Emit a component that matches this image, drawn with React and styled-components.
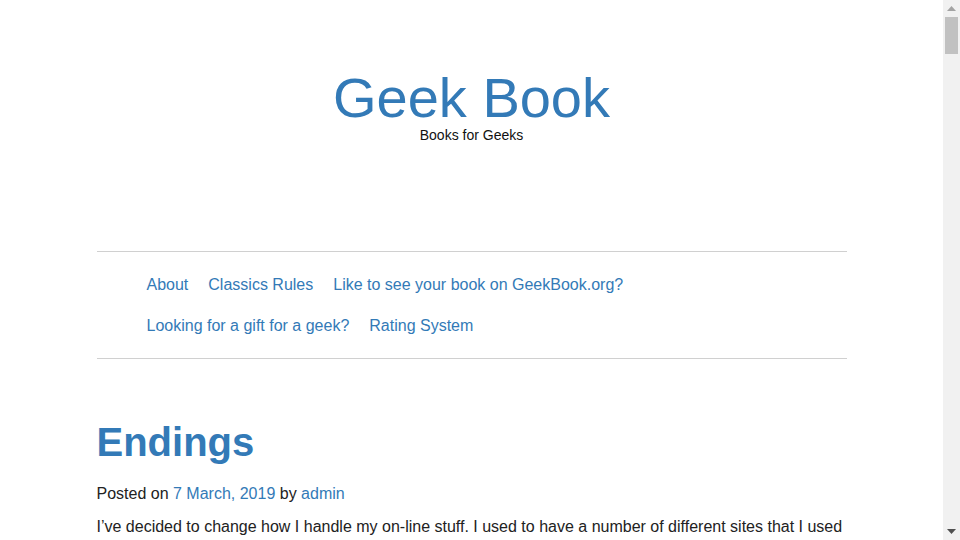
import React from 'react'
import styled, { createGlobalStyle } from 'styled-components'

const GlobalStyle = createGlobalStyle`
  html, body {
    margin: 0;
    padding: 0;
    background: #fff;
  }
  body {
    font-family: "Liberation Sans", Arial, sans-serif;
    font-size: 16px;
    color: #222;
    padding-right: 17px;
  }
  a {
    color: #337ab7;
    text-decoration: none;
  }
`

const navLinks = [
  'About',
  'Classics Rules',
  'Like to see your book on GeekBook.org?',
  'Looking for a gift for a geek?',
  'Rating System',
]

function Scrollbar() {
  return (
    <Track>
      <Arrow>
        <svg width="9" height="5" viewBox="0 0 9 5">
          <path d="M4.5 0 L9 5 L0 5 Z" fill="#a3a3a3" />
        </svg>
      </Arrow>
      <ThumbArea>
        <Thumb />
      </ThumbArea>
      <Arrow>
        <svg width="9" height="5" viewBox="0 0 9 5">
          <path d="M0 0 L9 0 L4.5 5 Z" fill="#505050" />
        </svg>
      </Arrow>
    </Track>
  )
}

export default function App() {
  return (
    <>
      <GlobalStyle />
      <Page>
        <Header>
          <SiteTitle href="#">Geek Book</SiteTitle>
          <Tagline>Books for Geeks</Tagline>
        </Header>
        <Nav>
          <NavList>
            {navLinks.map((l) => (
              <NavItem key={l}>
                <a href="#">{l}</a>
              </NavItem>
            ))}
          </NavList>
        </Nav>
        <Article>
          <PostTitle>
            <a href="#">Endings</a>
          </PostTitle>
          <Meta>
            Posted on <a href="#">7 March, 2019</a> by <a href="#">admin</a>
          </Meta>
          <Body>
            <p>
              I’ve decided to change how I handle my on-line stuff. I used to have a number of different sites that I used
              for different things, and keeping them all up to date has become more work than it is worth.
            </p>
            <p>
              So this is going to be the last post here. Thanks to everyone who has read along over the years,
              and to all the authors who sent their books in for review.
            </p>
          </Body>
        </Article>
      </Page>
      <Scrollbar />
    </>
  )
}

const Page = styled.div`
  max-width: 750px;
  min-height: 7400px;
  margin: 0 auto;
`

const Header = styled.header`
  display: flex;
  flex-direction: column;
  align-items: center;
  padding: 68px 0 108px;
`

const SiteTitle = styled.a`
  font-size: 56px;
  line-height: 59px;
  color: #337ab7;
`

const Tagline = styled.div`
  font-size: 14px;
  line-height: 16px;
  color: #111;
`

const Nav = styled.nav`
  border-top: 1px solid #d0d0d0;
  border-bottom: 1px solid #d0d0d0;
  padding: 12px 0;
`

const NavList = styled.ul`
  display: flex;
  flex-wrap: wrap;
  list-style: none;
  margin: 0;
  padding: 0 0 0 40px;
`

const NavItem = styled.li`
  font-size: 16px;
  line-height: 21px;
  padding: 10px;
`

const Article = styled.article`
  padding-top: 59px;
`

const PostTitle = styled.h1`
  margin: 0;
  font-size: 40px;
  line-height: 48px;
  font-weight: bold;
`

const Meta = styled.div`
  margin-top: 17px;
  font-size: 16px;
  line-height: 22px;
`

const Body = styled.div`
  font-size: 16px;
  line-height: 22px;
  p {
    margin: 11px 0 0;
  }
`

const Track = styled.div`
  position: fixed;
  top: 0;
  right: 0;
  width: 17px;
  height: 100vh;
  background: #f1f1f1;
  display: flex;
  flex-direction: column;
`

const Arrow = styled.div`
  height: 17px;
  display: flex;
  align-items: center;
  justify-content: center;
  flex-shrink: 0;
`

const ThumbArea = styled.div`
  flex: 1;
  padding: 0 2px;
`

const Thumb = styled.div`
  height: 37px;
  background: #c1c1c1;
`
